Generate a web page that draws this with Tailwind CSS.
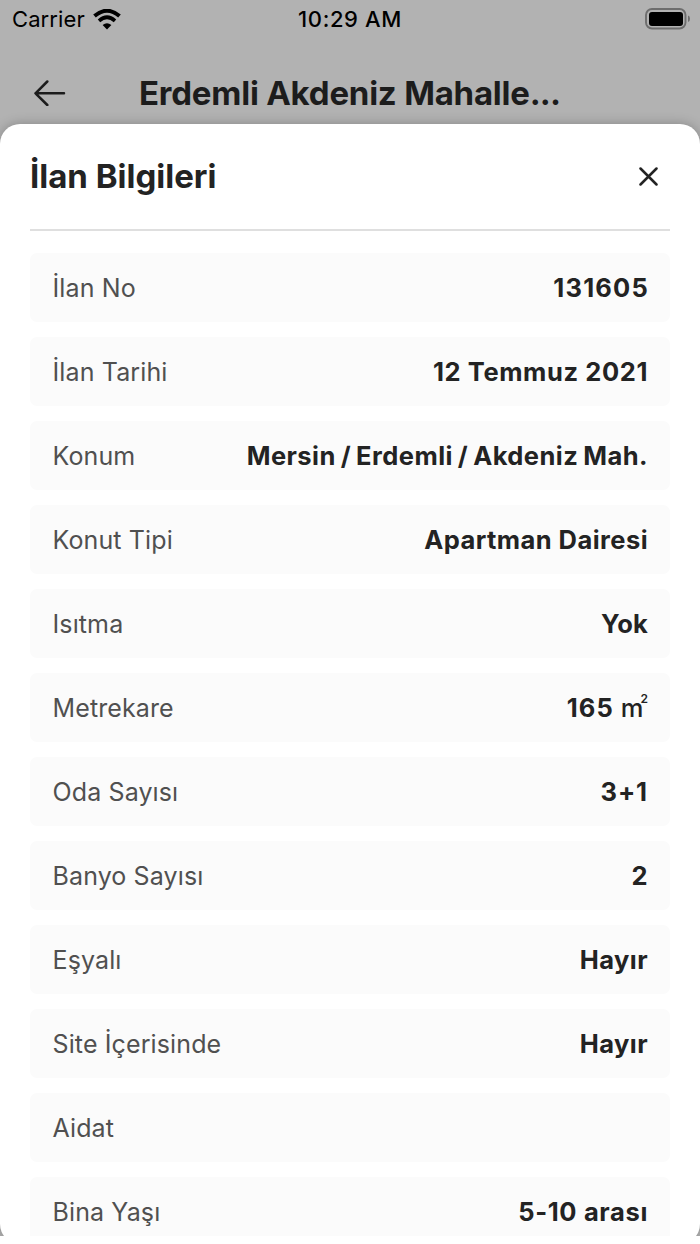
<!DOCTYPE html>
<html lang="tr"><head><meta charset="utf-8"><title>İlan Bilgileri</title><script src="https://cdn.jsdelivr.net/npm/@tailwindcss/browser@4"></script></head>
<body class="bg-white">
<div class="h-[1244px] w-[700px] overflow-hidden font-['Inter',sans-serif]">
<div class="h-[1236px] overflow-hidden bg-[#b2b2b2]">
<header class="h-[124px]">
<div class="grid h-[38px] grid-cols-3 items-center text-[22px] leading-none text-black">
<div class="flex items-center gap-2 pl-3"><span class="tracking-[0.1px]">Carrier</span>
<svg class="h-[21px] w-[28px]" viewBox="0 0 28 21"><path d="M1.5 7.1Q14-3.6 26.5 7.1" fill="none" stroke="#000" stroke-width="4"/><path d="M6 11.8Q14 4.8 22 11.8" fill="none" stroke="#000" stroke-width="3.7"/><path d="M9.6 16Q14 12.4 18.4 16L14 20.4Z"/></svg></div>
<span class="text-center font-medium tracking-[0.6px]">10:29 AM</span>
<div class="flex justify-end pr-[9px]"><svg class="h-[22px] w-[46px]" viewBox="0 0 46 22"><rect x="1" y="1" width="39.5" height="19.5" rx="6" fill="none" stroke="#6d6d6d" stroke-width="1.9"/><rect x="4" y="4" width="34" height="14" rx="3"/><path d="M43 7.5q2 .5 2 3.3t-2 3.3z" fill="#6d6d6d"/></svg></div>
</div>
<div class="flex h-[110px] items-center pl-[34px]">
<svg class="h-[26px] w-[32px]" viewBox="0 0 32 26" fill="none" stroke="#1c1c1c" stroke-width="2.5" stroke-linecap="round" stroke-linejoin="round"><path d="M30 13.3H1.5M13.3 1.5L1.5 13.3L13.3 25"/></svg>
<h1 class="ml-[73px] whitespace-nowrap text-[33px] font-bold leading-none tracking-[-0.22px] text-[#1c1c1c]">Erdemli Akdeniz Mahalle<span class="tracking-[-0.9px]">...</span></h1>
</div>
</header>
<main class="h-[1120px] rounded-[20px] bg-white px-[30px] shadow-[0_0_12px_rgba(0,0,0,0.25)]">
<div class="flex h-[107px] items-center justify-between border-b-2 border-[#dfdfdf] pr-[12px]">
<h2 class="text-[33px] font-bold leading-none text-[#232323]">İlan Bilgileri</h2>
<svg class="h-[19px] w-[19px]" viewBox="0 0 19 19" stroke="#232323" stroke-width="2.5" stroke-linecap="round"><path d="M1.5 1.5L17.5 17.5M17.5 1.5L1.5 17.5"/></svg>
</div>
<dl class="mt-[22px] flex flex-col gap-[15px] text-[25px] leading-none text-[#232323] [&>div]:flex [&>div]:h-[69px] [&>div]:shrink-0 [&>div]:items-center [&>div]:justify-between [&>div]:rounded-[7px] [&>div]:bg-[#fbfbfb] [&>div]:pl-[22.5px] [&>div]:pr-[22px] [&>div]:pt-[2px] [&_dd]:pb-[2px] [&_dd]:text-[25.5px] [&_dd]:font-bold [&_dt]:tracking-[0.12px] [&_dt]:text-[#505050]">
<div><dt>İlan No</dt><dd class="-mr-px tracking-[1.2px]">131605</dd></div>
<div><dt>İlan Tarihi</dt><dd class="tracking-[0.6px]">12 Temmuz 2021</dd></div>
<div><dt>Konum</dt><dd class="tracking-[0.45px] [word-spacing:-1.5px]">Mersin / Erdemli / Akdeniz Mah.</dd></div>
<div><dt>Konut Tipi</dt><dd class="tracking-[0.45px]">Apartman Dairesi</dd></div>
<div><dt>Isıtma</dt><dd class="tracking-[0.2px]">Yok</dd></div>
<div><dt>Metrekare</dt><dd class="flex tracking-[1.1px]"><span>165</span><span class="ml-[7px] font-medium tracking-[-3px]">m</span><sup class="-top-[2px] text-[12px] font-semibold leading-none tracking-normal">2</sup></dd></div>
<div><dt>Oda Sayısı</dt><dd class="tracking-[0.9px]">3+1</dd></div>
<div><dt>Banyo Sayısı</dt><dd class="tracking-[0.4px]">2</dd></div>
<div><dt>Eşyalı</dt><dd class="tracking-[0.45px]">Hayır</dd></div>
<div><dt>Site İçerisinde</dt><dd class="tracking-[0.45px]">Hayır</dd></div>
<div><dt>Aidat</dt><dd></dd></div>
<div><dt>Bina Yaşı</dt><dd class="tracking-[0.65px]">5-10 arası</dd></div>
</dl>
</main>
</div></div>
</body></html>
